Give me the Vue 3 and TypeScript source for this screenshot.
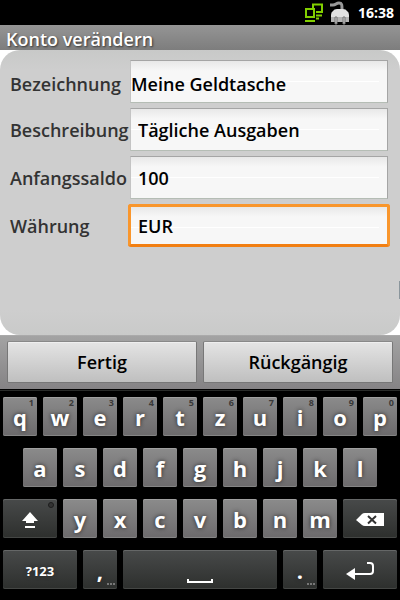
<script setup lang="ts">
import { reactive, ref } from 'vue'

interface Field {
  id: 'name' | 'description' | 'balance' | 'currency'
  label: string
}

interface Key {
  id: string
  text?: string
  hint?: string
  icon?: 'shift' | 'delete' | 'space' | 'enter'
  label?: string
  size?: 'wide' | 'wider' | 'bar'
  dark?: boolean
  more?: boolean
}

const fields: Field[] = [
  { id: 'name', label: 'Bezeichnung' },
  { id: 'description', label: 'Beschreibung' },
  { id: 'balance', label: 'Anfangssaldo' },
  { id: 'currency', label: 'Währung' },
]

const initial = {
  name: 'Meine Geldtasche',
  description: 'Tägliche Ausgaben',
  balance: '100',
  currency: 'EUR',
}
const account = reactive({ ...initial })
const active = ref<Field['id']>('currency')

const letters = (text: string): Key[] => text.split('').map((c) => ({ id: c, text: c }))

const rows: Key[][] = [
  letters('qwertzuiop').map((key, i) => ({ ...key, hint: String((i + 1) % 10) })),
  letters('asdfghjkl'),
  [
    { id: 'shift', icon: 'shift', label: 'Umschalt', size: 'wide', dark: true },
    ...letters('yxcvbnm'),
    { id: 'delete', icon: 'delete', label: 'Löschen', size: 'wide', dark: true },
  ],
  [
    { id: 'symbols', text: '?123', size: 'wider', dark: true },
    { id: 'comma', text: ',', dark: true, more: true },
    { id: 'space', icon: 'space', label: 'Leertaste', size: 'bar', dark: true },
    { id: 'period', text: '.', dark: true, more: true },
    { id: 'enter', icon: 'enter', label: 'Eingabe', size: 'wider', dark: true },
  ],
]

function press(key: Key) {
  const id = active.value
  if (key.icon === 'delete') account[id] = account[id].slice(0, -1)
  else if (key.icon === 'space') account[id] += ' '
  else if (key.text && key.text.length === 1) account[id] += key.text
}

function reset() {
  Object.assign(account, initial)
}
</script>

<template>
  <div class="screen">
    <header class="status">
      <svg class="net" viewBox="0 0 20 20" aria-hidden="true">
        <path d="M8 5V1.500H17V9H11M1 6H9V14H1ZM0 18H10M11 12.500H17M11 15.500H14" />
      </svg>
      <svg class="plug" viewBox="0 0 20 24" aria-hidden="true">
        <path class="cord" d="M0 4H3C6 4 6 2 9 2C12 2 12 4 12 8" />
        <path class="body" d="M3 10Q4 8 7 8H13Q16 8 17 10Q19 11 19 14V21H1V14Q1 11 3 10Z" />
        <path class="shade" d="M1 16H19V21H1Z" />
        <path class="prong" d="M5 16H7V23H5ZM13 16H15V23H13Z" />
      </svg>
      <time class="clock">16:38</time>
    </header>
    <h1 class="title">Konto verändern</h1>

    <form class="form" @submit.prevent>
      <div class="back">
        <div class="panel">
          <div v-for="f in fields" :key="f.id" class="row" :class="f.id">
            <label :for="f.id">{{ f.label }}</label>
            <input
              :id="f.id"
              v-model="account[f.id]"
              type="text"
              :class="{ active: active === f.id }"
              @focus="active = f.id"
            />
          </div>
        </div>
        <span class="thumb"></span>
      </div>
      <div class="actions">
        <button type="submit">Fertig</button>
        <button type="button" @click="reset">Rückgängig</button>
      </div>
    </form>

    <div class="keyboard">
      <div v-for="(row, i) in rows" :key="i" class="keys" :class="{ inset: i === 1 }">
        <button
          v-for="key in row"
          :key="key.id"
          type="button"
          class="key"
          :class="[key.size, key.id, { dark: key.dark }]"
          :aria-label="key.label"
          @click="press(key)"
        >
          <span v-if="key.hint" class="hint">{{ key.hint }}</span>
          <span v-if="key.text" class="char">{{ key.text }}</span>
          <svg v-if="key.icon === 'shift'" width="16" height="18" viewBox="0 0 16 18">
            <path d="M8 1L16 10H12V12H4V10H0Z" fill="#fff" />
            <path d="M3 15H13V17H3Z" fill="#fff" />
          </svg>
          <svg v-if="key.icon === 'delete'" width="28" height="14" viewBox="0 0 28 14">
            <path d="M0 7L6 1Q7 0 9 0H28V13H9Q7 13 6 12Z" fill="#fff" />
            <path d="M12 3L20 10.500M20 3L12 10.500" stroke="#333" stroke-width="2" />
          </svg>
          <svg v-if="key.icon === 'space'" width="26" height="6" viewBox="0 0 26 6">
            <path d="M1 1V4H25V1" fill="none" stroke="#fff" stroke-width="2" />
          </svg>
          <svg v-if="key.icon === 'enter'" width="28" height="18" viewBox="0 0 28 18">
            <path d="M0 12L9 6V18Z" fill="#fff" />
            <path
              d="M8 12H24Q27 12 27 9V4Q27 1 24 1H21"
              fill="none"
              stroke="#fff"
              stroke-width="2"
            />
          </svg>
          <span v-if="key.icon === 'shift'" class="lamp"></span>
          <span v-if="key.more" class="dots"><i></i><i></i><i></i></span>
        </button>
      </div>
    </div>
  </div>
</template>

<style>
body {
  background: #000;
}
</style>

<style scoped>
.screen {
  display: flex;
  flex-direction: column;
  min-height: 100vh;
  background: #000;
  font-family: 'Open Sans', 'Noto Sans', sans-serif;
  font-weight: 600;
}
button,
input {
  box-sizing: border-box;
  margin: 0;
  border: 0;
  font: inherit;
}
.status {
  display: flex;
  align-items: center;
  justify-content: flex-end;
  gap: 5px;
  height: 25px;
  padding-right: 6px;
}
.net {
  width: 20px;
  height: 20px;
  fill: none;
  stroke: #82cf00;
  stroke-width: 2;
}
.plug {
  width: 20px;
  height: 24px;
}
.cord {
  fill: none;
  stroke: #999;
  stroke-width: 3;
}
.body {
  fill: #e2e2e2;
}
.shade {
  fill: #b5b5b5;
}
.prong {
  fill: #ccc;
  stroke: #777;
}
.clock {
  margin-left: 3px;
  color: #fff;
  font-size: 14px;
  font-weight: 700;
}
.title {
  margin: 0;
  padding: 3px 6px 0;
  background: linear-gradient(#959595, #7d7d7d);
  color: #fff;
  font-size: 18px;
  font-weight: 600;
  line-height: 22px;
  text-shadow: 1px 1px 2px #333;
}
.form {
  display: flex;
  flex: 1;
  flex-direction: column;
}
.back {
  position: relative;
  display: flex;
  flex: 1;
  background: #fff;
}
.panel {
  display: flex;
  flex: 1;
  flex-direction: column;
  gap: 5px;
  padding: 10px 12px 10px 10px;
  border-radius: 20px;
  background: linear-gradient(#c8c9c8, #cecece 20px, #cecece 260px, #c9cac9);
}
.thumb {
  position: absolute;
  right: 0;
  bottom: 36px;
  width: 1px;
  height: 18px;
  background: #8b969c;
}
.row {
  display: grid;
  grid-template-columns: 120px 1fr;
  align-items: center;
  height: 43px;
  color: #333;
  font-size: 18px;
  line-height: 24px;
}
.row input {
  width: 100%;
  height: 43px;
  padding: 1px 7px;
  border: 1px solid #a5a5a5;
  border-left-color: #c4c4c4;
  border-bottom-color: #b5bdb5;
  outline: 0;
  background:
    linear-gradient(#fff, #fff) 0 20px / calc(100% - 8px) 1px no-repeat,
    linear-gradient(#e8e8e8, #f7f7f7 10px);
  color: #000;
}
.row.name label {
  padding-top: 4px;
}
.row.name input {
  padding: 5px 0 1px;
}
.row input.active {
  width: calc(100% + 4px);
  margin: 0 -2px;
  border: 3px solid #f9962c;
  border-bottom-color: #f27f12;
  border-radius: 3px;
}
.actions {
  display: flex;
  gap: 6px;
  padding: 5px 7px 6px;
  border-top: 1px solid #aaa;
  background: linear-gradient(#a3a3a3, #858385);
}
.actions button {
  flex: 1;
  height: 42px;
  border: 1px solid #777;
  border-top-color: #888;
  border-radius: 2px;
  background: linear-gradient(#e4e4e4, #bfbfbf);
  box-shadow: inset 0 1px #eee;
  color: #000;
  font-size: 18px;
}
.keyboard {
  display: flex;
  flex-direction: column;
  gap: 12px;
  padding: 7px 0 11px;
  border-top: 1px solid #000;
  background: linear-gradient(#292b29, #292b29) 0 0 / 100% 1px no-repeat #000;
}
.keys {
  display: grid;
  grid-template-columns: repeat(20, 1fr);
}
.inset .key:first-child {
  grid-column: 2 / span 2;
}
.key {
  position: relative;
  display: flex;
  grid-column: span 2;
  align-items: center;
  justify-content: center;
  height: 39px;
  margin: 0 3px;
  padding: 0;
  border-radius: 2px;
  background: linear-gradient(#8b8b8b, #6c6a6c);
  box-shadow:
    inset 0 1px #a0a0a0,
    inset 0 -1px #858585;
  color: #fff;
  font-size: 22px;
  font-weight: 700;
  line-height: 28px;
  text-shadow: 0 0 4px #222;
}
.dark {
  background: linear-gradient(#484a4a, #2d2f2d);
  box-shadow:
    inset 0 1px #656767,
    inset 0 -1px #454745;
}
.wide {
  grid-column: span 3;
}
.wider {
  grid-column: span 4;
}
.bar {
  grid-column: span 8;
}
.symbols {
  padding-top: 2px;
  font-size: 13px;
}
.shift,
.delete,
.enter {
  padding-top: 3px;
}
.space {
  padding-top: 22px;
}
.hint {
  position: absolute;
  top: 1px;
  right: 3px;
  color: #393939;
  font-size: 9px;
  line-height: 10px;
  text-shadow: none;
}
.lamp {
  position: absolute;
  top: 3px;
  right: 3px;
  width: 4px;
  height: 4px;
  border: 1px solid #1c1c1c;
  border-radius: 50%;
  background: #333;
}
.dots {
  position: absolute;
  right: 2px;
  bottom: 4px;
  display: flex;
  gap: 1px;
}
.dots i {
  width: 2px;
  height: 2px;
  background: #777;
}
</style>
